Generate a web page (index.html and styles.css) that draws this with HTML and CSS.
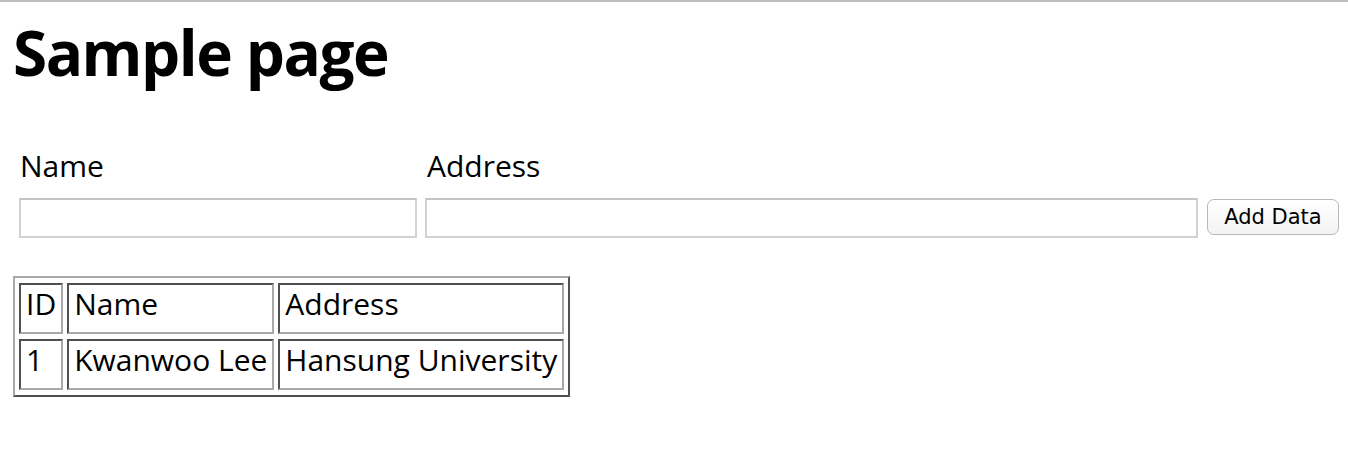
FILE: index.html
```html
<!DOCTYPE html>
<html>
<head>
<meta charset="utf-8">
<title>Sample page</title>
<link rel="stylesheet" href="styles.css">
</head>
<body>
<h1 class="title">Sample page</h1>
<form class="entry">
  <div class="field field-name">
    <label class="field-label">Name</label>
    <input class="field-input" type="text">
  </div>
  <div class="field field-addr">
    <label class="field-label">Address</label>
    <input class="field-input" type="text">
  </div>
  <button class="add-btn" type="button">Add Data</button>
</form>
<table class="data">
  <tr><td>ID</td><td>Name</td><td>Address</td></tr>
  <tr><td>1</td><td>Kwanwoo Lee</td><td>Hansung University</td></tr>
</table>
</body>
</html>
```

FILE: styles.css
```css
html, body {
  background: #fff;
}
body {
  margin: 0;
  border-top: 2px solid #bdbdbd;
  padding: 0 0 0 13px;
  font-family: "Open Sans", sans-serif;
  color: #000;
}
.title {
  font-size: 62px;
  font-weight: 700;
  line-height: 87px;
  margin: 7px 0 0;
  letter-spacing: -1.5px;
}
.entry {
  display: flex;
  align-items: flex-end;
  gap: 8px;
  margin-top: 49px;
  padding-left: 6px;
}
.field {
  display: flex;
  flex-direction: column;
  gap: 12px;
}
.field-label {
  font-size: 30px;
  line-height: 41px;
  padding-left: 1px;
}
.field-addr .field-label {
  padding-left: 2px;
}
.field-input {
  box-sizing: border-box;
  height: 40px;
  border: 2px solid #d2d2d2;
  border-top-color: #c4c4c4;
  background: #fff;
  margin: 0;
  padding: 0 6px;
  font-size: 20px;
}
.field-name .field-input { width: 398px; }
.field-addr .field-input { width: 773px; }
.add-btn {
  box-sizing: border-box;
  width: 132px;
  height: 36px;
  margin: 0 0 3px 1px;
  border: 1px solid #b8b8b8;
  border-radius: 7px;
  background: linear-gradient(#ffffff, #f3f3f3);
  font-family: "DejaVu Sans", sans-serif;
  font-size: 21px;
  color: #000;
  padding: 0;
}
.data {
  margin-top: 38px;
  border-collapse: separate;
  border-spacing: 4px 5px;
  border: 2px solid;
  border-color: #a9a9a9 #505050 #505050 #a9a9a9;
}
.data td {
  font-size: 30px;
  line-height: 37px;
  padding: 0 5px 10px;
  border: 2px solid;
  border-color: #505050 #a9a9a9 #a9a9a9 #505050;
  white-space: nowrap;
}
```
